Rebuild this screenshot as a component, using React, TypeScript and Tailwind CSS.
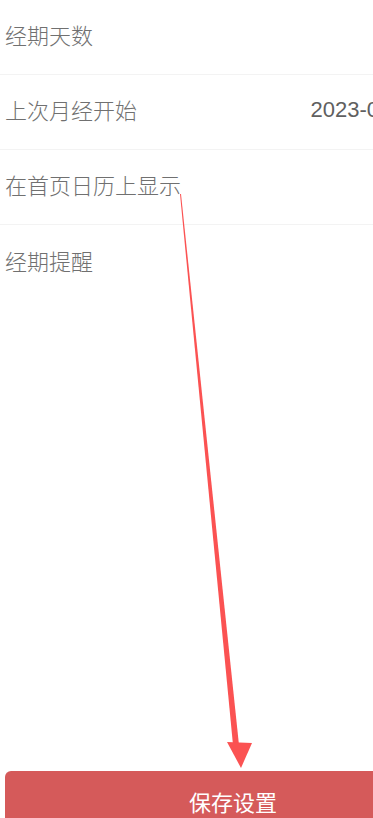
const rows = [
  { label: '经期天数', value: '' },
  { label: '上次月经开始', value: '2023-03-15' },
  { label: '在首页日历上显示', value: '' },
  { label: '经期提醒', value: '' }
]

function Arrow() {
  return (
    <svg
      className="pointer-events-none absolute left-0 top-0"
      width="373"
      height="818"
      viewBox="0 0 373 818"
    >
      <polygon points="180,194 181,194 239,745 233,745" fill="#fb5252" />
      <polygon points="227,742 252,743 241,768" fill="#fb5252" />
    </svg>
  )
}

export default function App() {
  return (
    <div
      className="relative h-[818px] w-[373px] overflow-hidden bg-white"
      style={{ fontFamily: '"Noto Sans CJK SC", "Noto Sans", sans-serif' }}
    >
      <div className="flex h-full w-[470px] flex-col">
        {rows.map((row, i) => (
          <div
            key={row.label}
            className={
              i < rows.length - 1
                ? 'flex h-[75px] shrink-0 items-center justify-between border-b border-[#f3f3f3] pb-[5px] pl-[5px] pr-[47px] text-[22px] font-light text-[#707070]'
                : 'flex h-[75px] shrink-0 items-center justify-between pb-[5px] pl-[5px] pr-[47px] text-[22px] font-light text-[#707070]'
            }
          >
            <span>{row.label}</span>
            {row.value ? (
              <span
                className="text-[22px] text-[#606060]"
                style={{ fontFamily: '"Liberation Sans", Arial, sans-serif' }}
              >
                {row.value}
              </span>
            ) : null}
          </div>
        ))}
        <div className="flex-1" />
        <div className="h-[47px] shrink-0 overflow-hidden pl-[5px]">
          <button className="flex h-[66px] w-[456px] items-start justify-center rounded-t-md bg-[#d55a5a] pt-[14px] text-[22px] leading-[32px] text-white">
            保存设置
          </button>
        </div>
      </div>
      <Arrow />
    </div>
  )
}
